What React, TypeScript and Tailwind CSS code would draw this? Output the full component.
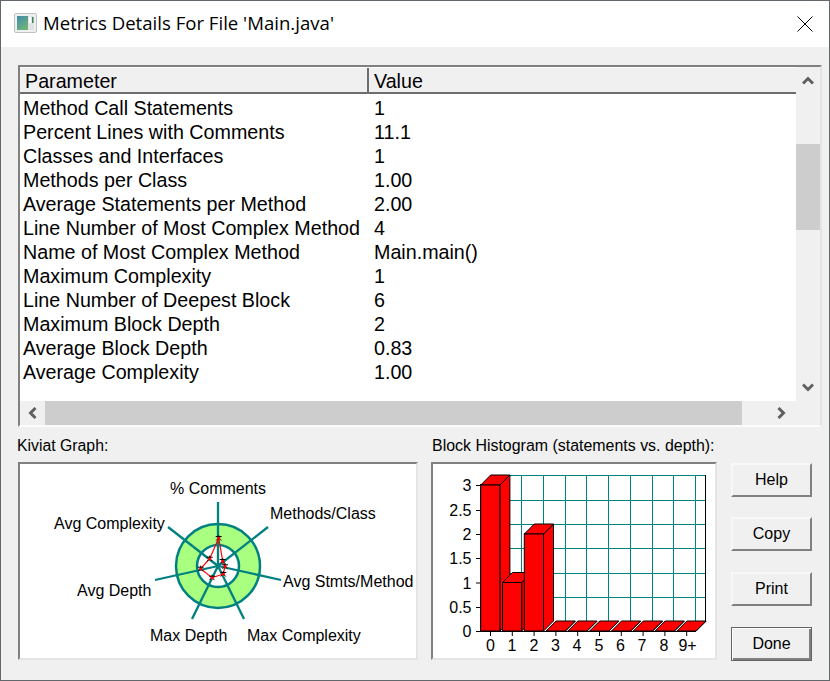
import React from 'react';

const rows: [string, string][] = [
  ['Method Call Statements', '1'],
  ['Percent Lines with Comments', '11.1'],
  ['Classes and Interfaces', '1'],
  ['Methods per Class', '1.00'],
  ['Average Statements per Method', '2.00'],
  ['Line Number of Most Complex Method', '4'],
  ['Name of Most Complex Method', 'Main.main()'],
  ['Maximum Complexity', '1'],
  ['Line Number of Deepest Block', '6'],
  ['Maximum Block Depth', '2'],
  ['Average Block Depth', '0.83'],
  ['Average Complexity', '1.00'],
];

const TEAL = '#008080';

function Arrow({ dir }: { dir: 'up' | 'down' | 'left' | 'right' }) {
  const d = {
    up: 'M1 8.5 L6 3.5 L11 8.5',
    down: 'M1 3.5 L6 8.5 L11 3.5',
    left: 'M8.5 1 L3.5 6 L8.5 11',
    right: 'M3.5 1 L8.5 6 L3.5 11',
  }[dir];
  return (
    <svg width="12" height="12" viewBox="0 0 12 12">
      <path d={d} fill="none" stroke="#606060" strokeWidth="3" />
    </svg>
  );
}

function WindowIcon() {
  return (
    <svg width="23" height="20" viewBox="0 0 23 20" className="mb-[2px]">
      <defs>
        <linearGradient id="ico" x1="0" y1="0" x2="0.6" y2="1">
          <stop offset="0" stopColor="#3f8aa8" />
          <stop offset="1" stopColor="#6fb37a" />
        </linearGradient>
      </defs>
      <rect x="0.5" y="0.5" width="22" height="19" rx="1.5" fill="#eef0f0" stroke="#bfc2c4" />
      <rect x="3" y="3" width="11" height="14" fill="url(#ico)" />
      <rect x="14" y="3" width="6" height="14" fill="#e2e4e4" />
      <rect x="15" y="4" width="2" height="6" fill="#ffffff" />
      <rect x="18" y="4" width="1.5" height="6" fill="#3f7f5c" />
    </svg>
  );
}

function Kiviat() {
  const cx = 218;
  const cy = 566;
  const spokes = [
    [218, 502],
    [268, 527],
    [281, 580],
    [244, 619],
    [192, 619],
    [155, 580],
    [168, 527],
  ];
  const pts = [
    [218.7, 538],
    [222.7, 561],
    [225, 566.3],
    [223.3, 574],
    [212, 577.7],
    [200.7, 568.7],
    [209.7, 558.7],
  ];
  const labels: [string, number, number][] = [
    ['% Comments', 170, 494],
    ['Methods/Class', 270, 519],
    ['Avg Stmts/Method', 283, 587],
    ['Max Complexity', 247, 641],
    ['Max Depth', 150, 641],
    ['Avg Depth', 77, 596],
    ['Avg Complexity', 54, 529],
  ];
  return (
    <svg width="396" height="194" viewBox="20 464 396 194" className="block">
      <circle cx={cx} cy={cy} r="31.5" fill="none" stroke="#a9ff80" strokeWidth="21" />
      <circle cx={cx} cy={cy} r="42" fill="none" stroke={TEAL} strokeWidth="2.5" />
      <circle cx={cx} cy={cy} r="21" fill="none" stroke={TEAL} strokeWidth="2.5" />
      {spokes.map(([x, y], i) => (
        <line key={i} x1={cx} y1={cy} x2={x} y2={y} stroke={TEAL} strokeWidth="2.3" />
      ))}
      <polygon points={pts.map((p) => p.join(',')).join(' ')} fill="none" stroke="#ff0000" strokeWidth="1.2" />
      {pts.map(([x, y], i) => (
        <g key={i}>
          <path d={`M${x - 3} ${y - 1.5} H${x + 3} M${x} ${y - 3} V${y + 1} M${x - 2.5} ${y + 2.5} L${x} ${y} L${x + 2.5} ${y + 2.5}`} stroke="#000000" strokeWidth="1" fill="none" />
          <rect x={x - 1.5} y={y - 1} width="3" height="2.5" fill="#ff0000" />
        </g>
      ))}
      {labels.map(([t, x, y]) => (
        <text key={t} x={x} y={y} fontSize="16" fill="#000000" fontFamily="'Liberation Sans', Arial, sans-serif">
          {t}
        </text>
      ))}
    </svg>
  );
}

function Histogram() {
  const bottom = 631;
  const hLines = [475, 500, 524, 548, 573, 597];
  const vLines = [522, 544, 566, 587, 609, 631, 653, 674, 696];
  const yTicks: [string, number][] = [
    ['3', 485],
    ['2.5', 510],
    ['2', 534],
    ['1.5', 558],
    ['1', 582.5],
    ['0.5', 607],
    ['0', 631],
  ];
  const xLabels: [string, number][] = [
    ['0', 491.5],
    ['1', 513],
    ['2', 535],
    ['3', 556.5],
    ['4', 578],
    ['5', 600],
    ['6', 621.5],
    ['7', 643],
    ['8', 665],
    ['9+', 688.5],
  ];
  const heights = [146, 48.5, 97, 0, 0, 0, 0, 0, 0, 0];
  return (
    <svg width="282" height="194" viewBox="434 464 282 194" className="block">
      {hLines.map((y) => (
        <line key={y} x1="491" y1={y + 0.5} x2="706" y2={y + 0.5} stroke={TEAL} strokeWidth="1" />
      ))}
      {vLines.map((x) => (
        <line key={x} x1={x + 0.5} y1="475" x2={x + 0.5} y2="621" stroke={TEAL} strokeWidth="1" />
      ))}
      <path d="M706.5 475 V621.5 L696.5 631.5" fill="none" stroke="#000000" strokeWidth="1" />
      {heights.map((h, i) => {
        const x0 = 481.7 + 21.8 * i;
        const x1 = x0 + 19.2;
        const top = bottom - h;
        return (
          <g key={i} stroke="#000000" strokeWidth="1" fill="#ff0000">
            <polygon points={`${x1},${bottom} ${x1 + 10},${bottom - 10} ${x1 + 10},${top - 10} ${x1},${top}`} />
            <polygon points={`${x0},${top} ${x0 + 10},${top - 10} ${x1 + 10},${top - 10} ${x1},${top}`} />
            {h > 0 && <rect x={x0} y={top} width={x1 - x0} height={h} />}
          </g>
        );
      })}
      <line x1="481.5" y1="484" x2="481.5" y2="632" stroke="#000000" />
      <line x1="477" y1="631.5" x2="697" y2="631.5" stroke="#000000" />
      {yTicks.map(([t, y]) => (
        <g key={t}>
          <line x1="477" y1={y + 0.5} x2="482" y2={y + 0.5} stroke="#000000" />
          <text x="472.5" y={y + 6} textAnchor="end" fontSize="16" fill="#000000" fontFamily="'Liberation Sans', Arial, sans-serif">
            {t}
          </text>
        </g>
      ))}
      {xLabels.map(([t, x], i) => (
        <g key={t}>
          <line x1={491.5 + 21.8 * i} y1="632" x2={491.5 + 21.8 * i} y2="636" stroke="#000000" />
          <text x={x} y="651" textAnchor="middle" fontSize="16" fill="#000000" fontFamily="'Liberation Sans', Arial, sans-serif">
            {t}
          </text>
        </g>
      ))}
    </svg>
  );
}

function DialogButton({ label, primary, className }: { label: string; primary?: boolean; className?: string }) {
  const base = primary
    ? 'h-[34px] w-[81px] border border-[#646464] bg-[#f0f0f0] text-[16px] text-black shadow-[inset_1px_1px_0_#ffffff,inset_-2px_-2px_0_#808080]'
    : 'h-[34px] w-[81px] border-2 border-t-[#f8f8f8] border-l-[#f8f8f8] border-r-[#808080] border-b-[#808080] bg-[#f0f0f0] text-[16px] text-black';
  return <button className={`${base} ${className ?? ''}`}>{label}</button>;
}

export default function App() {
  return (
    <div className="flex h-[681px] w-[830px] flex-col border border-[#62676b] bg-[#f0f0f0] font-['Liberation_Sans',Arial,sans-serif] text-black">
      {/* Title bar */}
      <div className="flex h-[46px] shrink-0 items-center bg-white pl-[13px] pr-[16px]">
        <WindowIcon />
        <span className="ml-[6px] mb-[2px] font-['Open_Sans',sans-serif] text-[18.6px]">Metrics Details For File 'Main.java'</span>
        <svg className="ml-auto" width="16" height="16" viewBox="0 0 16 16">
          <path d="M0.5 0.5 L15.5 15.5 M15.5 0.5 L0.5 15.5" stroke="#000000" strokeWidth="1" />
        </svg>
      </div>

      <div className="flex flex-1 flex-col px-[17px] pt-[18px]">
        {/* Metrics list */}
        <div className="flex h-[362px] w-[804px] flex-col border-2 border-t-[#808080] border-l-[#808080] border-r-[#e4e4e4] border-b-[#fbfbfb]">
          <div className="flex min-h-0 flex-1">
            <div className="flex w-[776px] flex-col bg-white">
              <div className="flex h-[27px] shrink-0 border-t border-t-white border-b-2 border-b-[#6e6e6e] bg-[#f0f0f0] text-[19.7px] leading-[26px]">
                <div className="w-[349px] border-r-2 border-r-[#6e6e6e] pl-[5px]">Parameter</div>
                <div className="pl-[5px]">Value</div>
              </div>
              <div className="flex flex-col pt-[2px]">
                {rows.map(([name, value]) => (
                  <div key={name} className="flex h-[24px] text-[19.7px] leading-[24px]">
                    <div className="w-[354px] pl-[3px] whitespace-nowrap">{name}</div>
                    <div>{value}</div>
                  </div>
                ))}
              </div>
            </div>
            <div className="flex w-[24px] flex-col items-center bg-[#f0f0f0]">
              <div className="flex h-[26px] items-center pt-[2px]">
                <Arrow dir="up" />
              </div>
              <div className="mt-[51px] h-[86px] w-full bg-[#cdcdcd]" />
              <div className="mt-auto flex h-[26px] items-center pb-[2px]">
                <Arrow dir="down" />
              </div>
            </div>
          </div>
          <div className="flex h-[24px] shrink-0 items-center bg-[#f0f0f0]">
            <div className="flex h-full w-[25px] items-center justify-center">
              <Arrow dir="left" />
            </div>
            <div className="h-full w-[697px] bg-[#cdcdcd]" />
            <div className="flex h-full w-[78px] items-center justify-center">
              <Arrow dir="right" />
            </div>
          </div>
        </div>

        {/* Graphs and buttons */}
        <div className="mt-[8px] flex">
          <div className="w-[401px]">
            <div className="-ml-[1px] h-[27px] pt-[1px] text-[15.8px] leading-[20px]">Kiviat Graph:</div>
            <div className="h-[198px] border-2 border-t-[#808080] border-l-[#808080] border-r-[#e4e4e4] border-b-[#e4e4e4] bg-white">
              <Kiviat />
            </div>
          </div>
          <div className="ml-[13px] w-[286px]">
            <div className="h-[27px] pt-[1px] pl-[1px] text-[15.95px] leading-[20px] whitespace-nowrap">Block Histogram (statements vs. depth):</div>
            <div className="h-[198px] border-2 border-t-[#808080] border-l-[#808080] border-r-[#e4e4e4] border-b-[#e4e4e4] bg-white">
              <Histogram />
            </div>
          </div>
          <div className="ml-[14px] mt-[28px] flex flex-col">
            <DialogButton label="Help" />
            <DialogButton label="Copy" className="mt-[20px]" />
            <DialogButton label="Print" className="mt-[21px]" />
            <DialogButton label="Done" primary className="mt-[21px]" />
          </div>
        </div>
      </div>
    </div>
  );
}
